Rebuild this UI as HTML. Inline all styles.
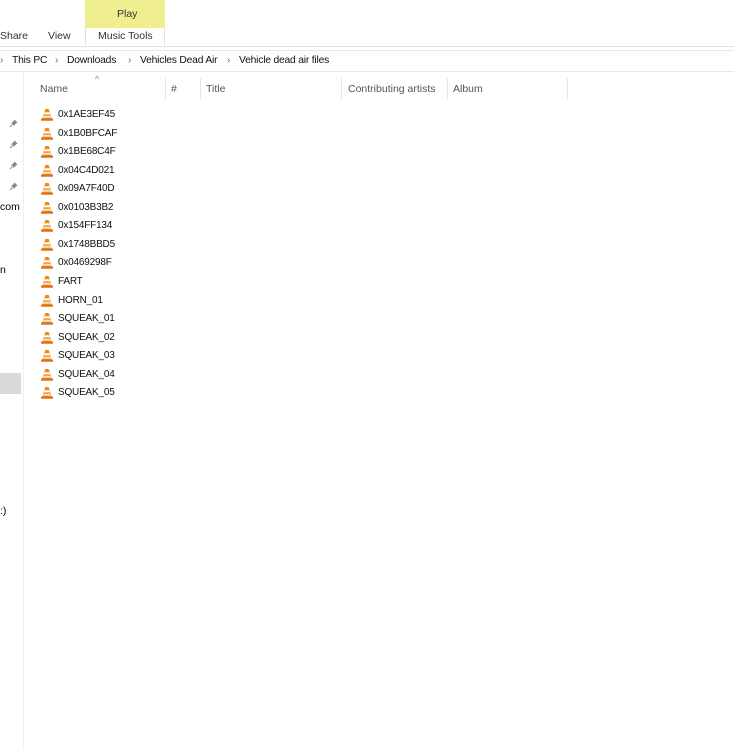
<!DOCTYPE html>
<html><head><meta charset="utf-8"><style>
*{margin:0;padding:0;box-sizing:border-box}
body{width:734px;height:750px;overflow:hidden;background:#fff;font-family:"Segoe UI","Liberation Sans",sans-serif;font-size:10.5px;color:#000;position:relative}
.a{position:absolute;white-space:nowrap}
.g{position:absolute;color:#666;font-size:10px}
.pin{position:absolute;left:9px;width:9px;height:9px}
.row{position:absolute;left:41px;height:18px;display:flex;align-items:center}
.row span{margin-left:5px;font-size:10px;letter-spacing:-0.2px;color:#111}
.hd{color:#555;font-size:10.5px}
.sep{position:absolute;top:78px;width:1px;height:22px;background:#e6e6e6}
.bc{position:absolute;top:55px;white-space:nowrap;font-size:10.3px;letter-spacing:-0.2px;color:#111}
</style></head><body>
<div class="a" style="left:85px;top:0;width:80px;height:28px;background:#efef8f"></div>
<div class="a" style="left:85px;top:28px;width:80px;height:17px;border:1px solid #e0e0e0;border-top:none;border-bottom:none"></div>
<div class="a" style="left:117px;top:8px;color:#333">Play</div>
<div class="a" style="left:0;top:30px;color:#333">Share</div>
<div class="a" style="left:48px;top:30px;color:#333">View</div>
<div class="a" style="left:98px;top:30px;color:#333">Music Tools</div>
<div class="a" style="left:0;top:46px;width:734px;height:1px;background:#e3e3e3"></div>
<div class="a" style="left:0;top:50px;width:734px;height:22px;border-top:1px solid #e8e8e8;border-bottom:1px solid #e8e8e8"></div>
<div class="g" style="left:0;top:55px">›</div>
<div class="bc" style="left:12px">This PC</div>
<div class="g" style="left:55px;top:55px">›</div>
<div class="bc" style="left:67px">Downloads</div>
<div class="g" style="left:128px;top:55px">›</div>
<div class="bc" style="left:140px">Vehicles Dead Air</div>
<div class="g" style="left:227px;top:55px">›</div>
<div class="bc" style="left:239px">Vehicle dead air files</div>
<div class="a" style="left:23px;top:72px;width:1px;height:678px;background:#f0f0f0"></div>
<div class="a" style="left:0;top:373px;width:21px;height:21px;background:#d9d9d9"></div>
<div class="a" style="left:0;top:201px">com</div>
<div class="a" style="left:0;top:264px">n</div>
<div class="a" style="left:0;top:505px">:)</div>
<svg class="pin" style="top:119px" viewBox="0 0 9 9"><path d="M5.5 0.5L8.5 3.5L7 4.5L4.5 7L4 5L1 8L4 5L2 4.5L4.5 2Z" fill="#888"/><path d="M1 8L3.5 5.5" stroke="#888" stroke-width="1"/></svg>
<svg class="pin" style="top:140px" viewBox="0 0 9 9"><path d="M5.5 0.5L8.5 3.5L7 4.5L4.5 7L4 5L1 8L4 5L2 4.5L4.5 2Z" fill="#888"/><path d="M1 8L3.5 5.5" stroke="#888" stroke-width="1"/></svg>
<svg class="pin" style="top:161px" viewBox="0 0 9 9"><path d="M5.5 0.5L8.5 3.5L7 4.5L4.5 7L4 5L1 8L4 5L2 4.5L4.5 2Z" fill="#888"/><path d="M1 8L3.5 5.5" stroke="#888" stroke-width="1"/></svg>
<svg class="pin" style="top:182px" viewBox="0 0 9 9"><path d="M5.5 0.5L8.5 3.5L7 4.5L4.5 7L4 5L1 8L4 5L2 4.5L4.5 2Z" fill="#888"/><path d="M1 8L3.5 5.5" stroke="#888" stroke-width="1"/></svg>
<div class="a" style="left:95px;top:74px;color:#888;font-size:9px">^</div>
<div class="a hd" style="left:40px;top:83px">Name</div>
<div class="sep" style="left:165px"></div>
<div class="a hd" style="left:171px;top:83px">#</div>
<div class="sep" style="left:200px"></div>
<div class="a hd" style="left:206px;top:83px">Title</div>
<div class="sep" style="left:341px"></div>
<div class="a hd" style="left:348px;top:83px">Contributing artists</div>
<div class="sep" style="left:447px"></div>
<div class="a hd" style="left:453px;top:83px">Album</div>
<div class="sep" style="left:567px"></div>
<div id="rows"></div>
<script>
var n=["0x1AE3EF45","0x1B0BFCAF","0x1BE68C4F","0x04C4D021","0x09A7F40D","0x0103B3B2","0x154FF134","0x1748BBD5","0x0469298F","FART","HORN_01","SQUEAK_01","SQUEAK_02","SQUEAK_03","SQUEAK_04","SQUEAK_05"];
var h="";
n.forEach(function(t,i){var y=105.5+i*18.55;
h+='<div class="row" style="top:'+y+'px"><svg width="12" height="13" viewBox="0 0 12 13"><path d="M4.3 1h3.4l3 10H1.3z" fill="#f08a14"/><path d="M3.6 4.2h4.8l.6 2.2H3z" fill="#fff"/><path d="M2.6 7.8h6.8l.6 2H2z" fill="#f6f6f6" opacity=".85"/><rect x="0" y="10.5" width="12" height="2.2" rx=".6" fill="#e07010"/></svg><span>'+t+'</span></div>';});
document.getElementById("rows").innerHTML=h;
</script>
</body></html>
